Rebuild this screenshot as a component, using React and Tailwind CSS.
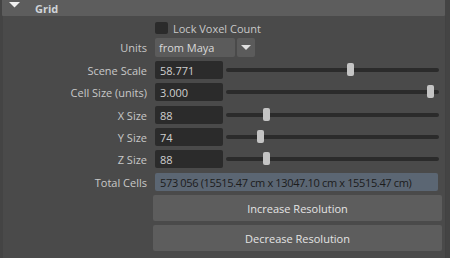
import React from "react";

const font = { fontFamily: '"Open Sans", "Liberation Sans", sans-serif' };

function SliderRow({ label, value, pos, mt }) {
  return (
    <div className={`flex items-center h-[18px] ${mt}`}>
      <div className="w-[144px] text-right text-[11px] text-[#c8c8c8] leading-none">{label}</div>
      <div className="ml-[8px] w-[68px] h-[18px] bg-[#2b2b2b] rounded-[2px] flex items-center pl-[5px] text-[11px] text-[#cfcfcf] leading-none">
        {value}
      </div>
      <div className="relative ml-[3px] w-[213px] h-[18px] flex items-center">
        <div className="w-full h-[4px] rounded-full bg-[#2b2b2b]" />
        <div
          className="absolute top-[2px] w-[7px] h-[13px] rounded-[2px] bg-[#c4c4c4]"
          style={{ left: pos }}
        />
      </div>
    </div>
  );
}

export default function App() {
  return (
    <div className="w-[450px] h-[258px] bg-[#444444] overflow-hidden flex flex-col" style={font}>
      <div className="ml-[2px] w-[443px] h-[16px] bg-[#5d5d5d] flex items-center rounded-b-[1px]">
        <svg width="12" height="6" viewBox="0 0 12 6" className="ml-[7px] -mt-[6px]">
          <polygon points="0,0 11,0 5.5,5.5" fill="#f0f0f0" />
        </svg>
        <span className="ml-[14px] text-[11px] font-bold text-[#d0d4d8] leading-none">Grid</span>
      </div>
      <div className="flex-1 ml-[3px] w-[443px] bg-[#4a4a4a] flex flex-col border-r border-[#424242]">
        <div className="flex items-center h-[12px] mt-[6px]">
          <div className="ml-[152px] w-[13px] h-[12px] bg-[#2b2b2b] rounded-[2px]" />
          <span className="ml-[5px] text-[11px] text-[#c8c8c8] leading-none">Lock Voxel Count</span>
        </div>
        <div className="flex items-center h-[19px] mt-[4px]">
          <div className="w-[144px] text-right text-[11px] text-[#c8c8c8] leading-none">Units</div>
          <div className="ml-[8px] w-[80px] h-[19px] bg-[#5b5b5b] rounded-[2px] flex items-center pl-[4px] text-[11px] text-[#d8d8d8] leading-none">
            from Maya
          </div>
          <div className="ml-[2px] w-[18px] h-[19px] bg-[#5b5b5b] rounded-[2px] flex items-center justify-center">
            <svg width="10" height="5" viewBox="0 0 10 5">
              <polygon points="0,0 10,0 5,5" fill="#e0e0e0" />
            </svg>
          </div>
        </div>
        <SliderRow label="Scene Scale" value="58.771" pos={121} mt="mt-[4px]" />
        <SliderRow label="Cell Size (units)" value="3.000" pos={201} mt="mt-[4px]" />
        <SliderRow label="X Size" value="88" pos={37} mt="mt-[5px]" />
        <SliderRow label="Y Size" value="74" pos={31} mt="mt-[4px]" />
        <SliderRow label="Z Size" value="88" pos={37} mt="mt-[4px]" />
        <div className="flex items-center h-[18px] mt-[5px]">
          <div className="w-[144px] text-right text-[11px] text-[#c8c8c8] leading-none">Total Cells</div>
          <div className="ml-[8px] w-[283px] h-[18px] bg-[#5b6673] rounded-[2px] flex items-center pl-[5px] text-[11px] tracking-[-0.35px] text-[#1c1c1c] leading-none whitespace-nowrap">
            573 056 (15515.47 cm x 13047.10 cm x 15515.47 cm)
          </div>
        </div>
        <div className="ml-[150px] w-[289px] h-[26px] mt-[4px] bg-[#5d5d5d] rounded-[2px] flex items-center justify-center text-[11px] text-[#e4e4e4] leading-none">
          Increase Resolution
        </div>
        <div className="ml-[150px] w-[289px] h-[26px] mt-[4px] bg-[#5d5d5d] rounded-[2px] flex items-center justify-center text-[11px] text-[#e4e4e4] leading-none">
          Decrease Resolution
        </div>
      </div>
    </div>
  );
}
